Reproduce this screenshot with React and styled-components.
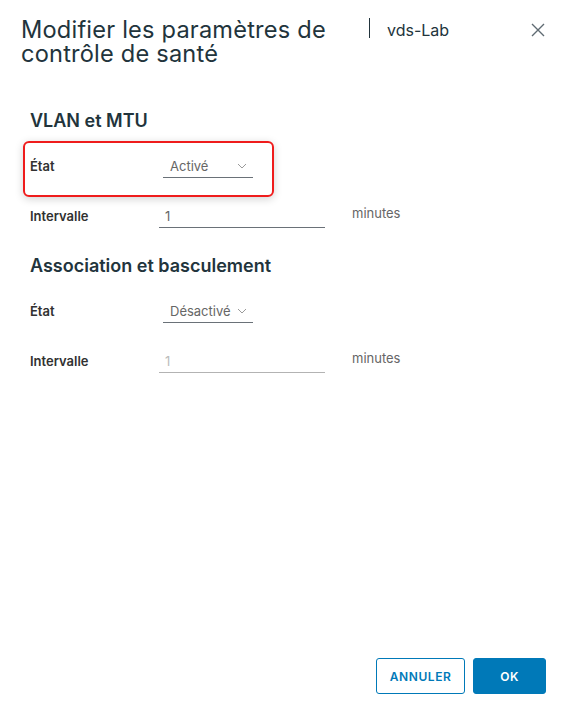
import React from "react";
import styled, { createGlobalStyle } from "styled-components";

const Global = createGlobalStyle`
  html, body { margin: 0; padding: 0; background: #fff; }
  body { font-family: Inter, "Noto Sans", sans-serif; color: #22343c; }
  * { box-sizing: border-box; }
`;

const Dialog = styled.div`
  width: 561px;
  height: 708px;
  display: flex;
  flex-direction: column;
  background: #fff;
`;

const Header = styled.div`
  display: flex;
  align-items: flex-start;
  padding: 18px 14px 0 21px;
`;

const Title = styled.h3`
  margin: 0;
  width: 330px;
  font-size: 23.6px;
  line-height: 24px;
  font-weight: 400;
  color: #22343c;
  letter-spacing: 0.2px;
`;

const Divider = styled.div`
  width: 1px;
  height: 20px;
  background: #22343c;
  margin: 0 17px 0 18px;
`;

const Subtitle = styled.div`
  font-size: 16px;
  line-height: 24px;
  color: #22343c;
  flex: 1;
`;

const Close = styled.button`
  border: 0;
  background: none;
  padding: 0;
  margin-top: 3px;
  width: 18px;
  height: 18px;
  cursor: pointer;
  display: flex;
  align-items: center;
  justify-content: center;
`;

const Body = styled.div`
  padding: 43px 0 0 30px;
  display: flex;
  flex-direction: column;
`;

const SectionTitle = styled.h4`
  margin: ${(p) => p.$mt}px 0 0;
  font-size: 18px;
  line-height: 24px;
  font-weight: 600;
  color: #22343c;
`;

const Row = styled.div`
  position: relative;
  display: grid;
  grid-template-columns: 129px max-content max-content;
  justify-content: start;
  align-items: end;
  margin-top: ${(p) => p.$mt}px;
  height: 24px;

  ${(p) =>
    p.$highlight &&
    `
    &::after {
      content: "";
      position: absolute;
      left: -7px;
      top: -13px;
      width: 247px;
      height: 52px;
      border: 2px solid #ef1c1c;
      border-radius: 6px;
      box-shadow: 0 2px 8px rgba(0,0,0,0.18);
      pointer-events: none;
    }
  `}
`;

const Label = styled.label`
  font-size: 13px;
  font-weight: 600;
  line-height: 18px;
  padding-bottom: 3px;
  color: #313131;
`;

const Select = styled.div`
  margin-left: 4px;
  width: 90px;
  height: 24px;
  border-bottom: 1px solid #6a7178;
  display: flex;
  align-items: center;
  padding-left: 7px;
  gap: ${(p) => (p.$tight ? "6px" : "0")};
  justify-content: ${(p) => (p.$tight ? "flex-start" : "space-between")};
  padding-right: 6px;
  font-size: 13px;
  color: #666;
`;

const Input = styled.div`
  width: 166px;
  height: 24px;
  border-bottom: 1px solid ${(p) => (p.$disabled ? "#b3b3b3" : "#6a7178")};
  padding-left: 6px;
  display: flex;
  align-items: center;
  font-size: 13px;
  color: ${(p) => (p.$disabled ? "#bbb" : "#666")};
`;

const Unit = styled.span`
  margin-left: 27px;
  font-size: 13px;
  color: #666;
  padding-bottom: 7px;
`;

const Footer = styled.div`
  margin-top: auto;
  display: flex;
  justify-content: flex-end;
  gap: 8px;
  padding: 0 15px 14px 0;
`;

const Button = styled.button`
  height: 36px;
  padding: 0 ${(p) => (p.$primary ? "26px" : "12px")};
  min-width: ${(p) => (p.$primary ? "72px" : "89px")};
  border-radius: 3px;
  border: 1px solid #0079b8;
  background: ${(p) => (p.$primary ? "#0079b8" : "#fff")};
  color: ${(p) => (p.$primary ? "#fff" : "#0079b8")};
  font-family: Inter, "Noto Sans", sans-serif;
  font-size: 12px;
  font-weight: 600;
  letter-spacing: 0.6px;
  cursor: pointer;
`;

const Chevron = () => (
  <svg width="10" height="6" viewBox="0 0 10 6" fill="none">
    <path d="M1 1l4 4 4-4" stroke="#9a9a9a" strokeWidth="1" />
  </svg>
);

export default function App() {
  return (
    <>
      <Global />
      <Dialog>
        <Header>
          <Title>Modifier les paramètres de contrôle de santé</Title>
          <Divider />
          <Subtitle>vds-Lab</Subtitle>
          <Close aria-label="Fermer">
            <svg width="14" height="14" viewBox="0 0 14 14">
              <path d="M1 1l12 12M13 1L1 13" stroke="#5f6b72" strokeWidth="1.4" />
            </svg>
          </Close>
        </Header>
        <Body>
          <SectionTitle $mt={0}>VLAN et MTU</SectionTitle>
          <Row $mt={21} $highlight>
            <Label>État</Label>
            <Select>
              Activé <Chevron />
            </Select>
          </Row>
          <Row $mt={26}>
            <Label>Intervalle</Label>
            <Input>1</Input>
            <Unit>minutes</Unit>
          </Row>
          <SectionTitle $mt={26}>Association et basculement</SectionTitle>
          <Row $mt={21}>
            <Label>État</Label>
            <Select $tight>
              Désactivé <Chevron />
            </Select>
          </Row>
          <Row $mt={26}>
            <Label>Intervalle</Label>
            <Input $disabled>1</Input>
            <Unit>minutes</Unit>
          </Row>
        </Body>
        <Footer>
          <Button>ANNULER</Button>
          <Button $primary>OK</Button>
        </Footer>
      </Dialog>
    </>
  );
}
